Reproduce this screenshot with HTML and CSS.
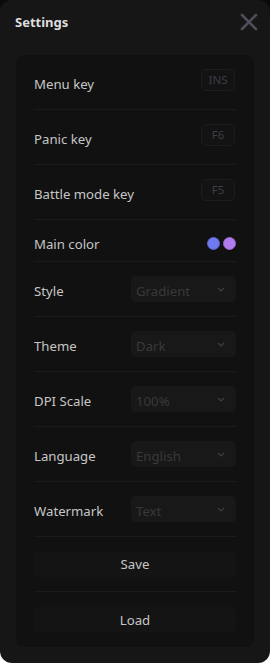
FILE: index.html
```html
<!DOCTYPE html>
<html lang="en">
<head>
    <meta charset="UTF-8">
    <title>Settings</title>
    <meta name="viewport" content="width=device-width, initial-scale=1.0">
    <link rel="stylesheet" href="styles.css">
</head>
<body>

<div id="window">
    <div id="header">
        <h2>Settings</h2>
        <svg id="close" width="18" height="18" viewBox="0 0 18 18">
            <path d="M2 2 L16 16 M16 2 L2 16" stroke="#4e4e5a" stroke-width="2.6" stroke-linecap="round"/>
        </svg>
    </div>

    <div id="panel">
        <div class="row">
            <span class="label">Menu key</span>
            <span class="key">INS</span>
        </div>
        <div class="row">
            <span class="label">Panic key</span>
            <span class="key">F6</span>
        </div>
        <div class="row">
            <span class="label">Battle mode key</span>
            <span class="key">F5</span>
        </div>
        <div class="row short">
            <span class="label">Main color</span>
            <div class="colors">
                <span class="dot blue"></span>
                <span class="dot purple"></span>
            </div>
        </div>
        <div class="row">
            <span class="label">Style</span>
            <div class="select"><span>Gradient</span><svg width="8" height="5" viewBox="0 0 8 5"><path d="M1 1 L4 4 L7 1" stroke="#3f3f3f" stroke-width="1.2" fill="none"/></svg></div>
        </div>
        <div class="row">
            <span class="label">Theme</span>
            <div class="select"><span>Dark</span><svg width="8" height="5" viewBox="0 0 8 5"><path d="M1 1 L4 4 L7 1" stroke="#3f3f3f" stroke-width="1.2" fill="none"/></svg></div>
        </div>
        <div class="row">
            <span class="label">DPI Scale</span>
            <div class="select"><span>100%</span><svg width="8" height="5" viewBox="0 0 8 5"><path d="M1 1 L4 4 L7 1" stroke="#3f3f3f" stroke-width="1.2" fill="none"/></svg></div>
        </div>
        <div class="row">
            <span class="label">Language</span>
            <div class="select"><span>English</span><svg width="8" height="5" viewBox="0 0 8 5"><path d="M1 1 L4 4 L7 1" stroke="#3f3f3f" stroke-width="1.2" fill="none"/></svg></div>
        </div>
        <div class="row">
            <span class="label">Watermark</span>
            <div class="select"><span>Text</span><svg width="8" height="5" viewBox="0 0 8 5"><path d="M1 1 L4 4 L7 1" stroke="#3f3f3f" stroke-width="1.2" fill="none"/></svg></div>
        </div>
        <div class="row">
            <button>Save</button>
        </div>
        <div class="row last">
            <button>Load</button>
        </div>
    </div>
</div>

</body>
</html>
```

FILE: styles.css
```css
html {
    background: linear-gradient(#0a0a0a 50%, #ffffff 50%);
    height: 100%;
}

body {
    margin: 0;
    height: 100%;
    font-family: "Noto Sans", sans-serif;
}

#window {
    background: #161616;
    height: 663px;
    box-sizing: border-box;
    border-radius: 12px;
    padding: 0 16px 16px 16px;
}

#header {
    display: flex;
    align-items: center;
    justify-content: space-between;
    height: 55px;
    margin-left: -1px;
    margin-right: -4px;
}

#header h2 {
    margin: 0 0 12px 0;
    font-size: 13px;
    font-weight: bold;
    color: #dedede;
}

#close {
    margin-bottom: 12px;
}

#panel {
    background: #111111;
    border-radius: 8px;
    padding: 0 18px 0 18px;
}

.row {
    display: flex;
    align-items: center;
    justify-content: space-between;
    height: 55px;
    box-sizing: border-box;
    border-bottom: 1px solid #1b1b1b;
}

.row.short {
    height: 42px;
}

.row.short .label {
    padding-top: 7px;
}

.row.last {
    border-bottom: none;
}

.label {
    color: #c6c6c6;
    font-size: 13.2px;
    padding-top: 3px;
}

.key {
    font-size: 11.5px;
    color: #3e3e46;
    background: #131313;
    border: 1px solid #1d1d1d;
    border-radius: 5px;
    width: 32px;
    height: 20px;
    line-height: 20px;
    text-align: center;
    margin-top: -5px;
    margin-right: 1px;
}

.colors {
    display: flex;
    gap: 3px;
    margin-top: 6px;
}

.dot {
    width: 11px;
    height: 11px;
    border-radius: 50%;
}

.blue {
    background: #6e79f2;
    border: 1px solid #5a64c9;
}

.purple {
    background: #b17cf0;
    border: 1px solid #9566c9;
}

.select {
    display: flex;
    align-items: center;
    justify-content: space-between;
    width: 105px;
    height: 26px;
    box-sizing: border-box;
    padding: 0 11px 0 5px;
    background: #181818;
    border-radius: 5px;
    color: #393939;
    font-size: 13.2px;
}

.select span {
    padding-top: 3px;
}

button {
    width: 100%;
    height: 25px;
    background: #141414;
    border: none;
    border-radius: 5px;
    color: #c6c6c6;
    font-family: "Noto Sans", sans-serif;
    font-size: 13.2px;
}
```
